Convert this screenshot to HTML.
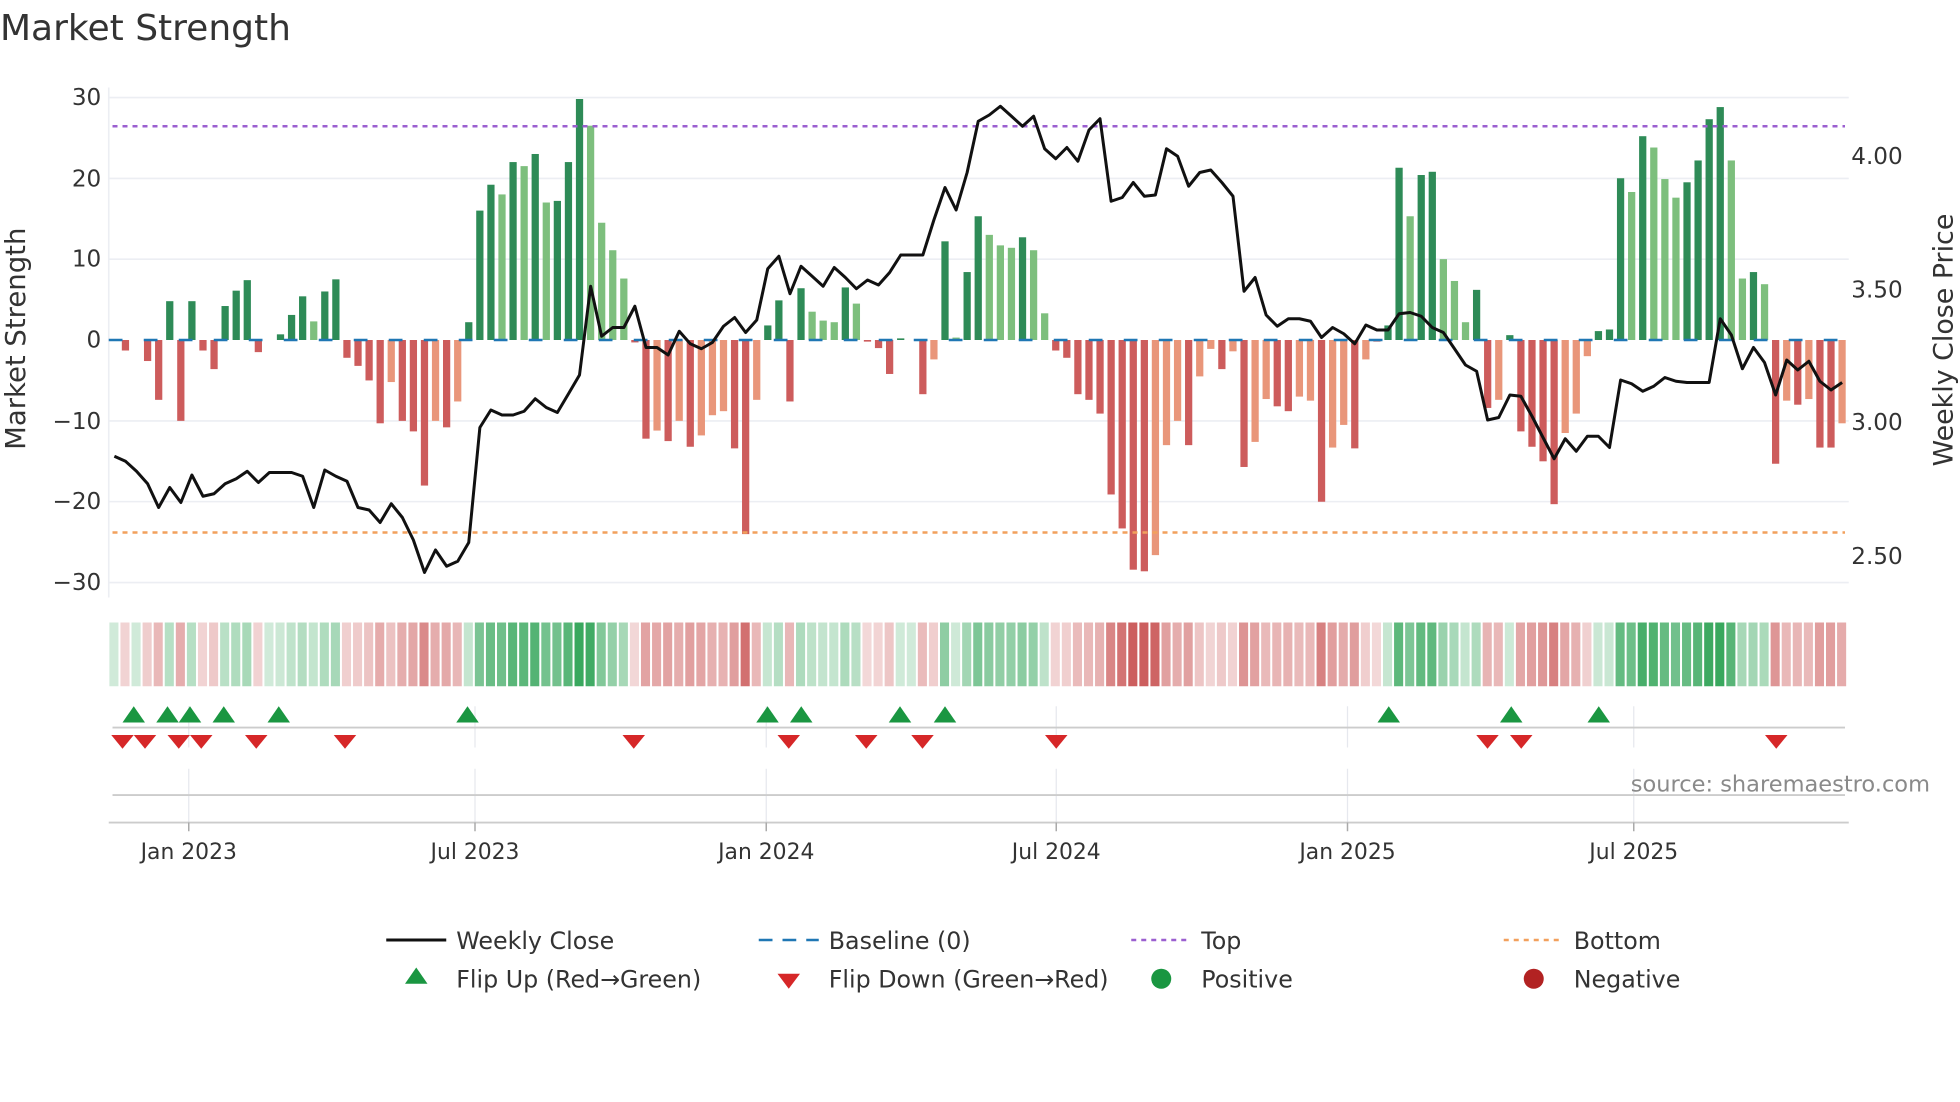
<!DOCTYPE html>
<html><head><meta charset="utf-8"><style>
html,body{margin:0;padding:0;background:#fff;}
svg{display:block;font-family:"DejaVu Sans","Liberation Sans",sans-serif;}
</style></head><body>
<svg id="s" width="1960" height="1102" viewBox="0 0 1568 881.6" xmlns="http://www.w3.org/2000/svg">
<rect width="1568" height="882" fill="#fff"/>
<text x="0" y="32" font-size="28.8" fill="#333">Market Strength</text>
<g stroke="#eceef3" stroke-width="1.3">
<line x1="87" x2="1479" y1="78" y2="78"/><line x1="87" x2="1479" y1="142.7" y2="142.7"/>
<line x1="87" x2="1479" y1="207.3" y2="207.3"/><line x1="87" x2="1479" y1="336.7" y2="336.7"/>
<line x1="87" x2="1479" y1="401.3" y2="401.3"/><line x1="87" x2="1479" y1="466" y2="466"/>
<line x1="87" x2="87" y1="70" y2="478"/>
</g>
<g font-size="18.5" fill="#333" text-anchor="end">
<text x="81" y="84">30</text><text x="81" y="149">20</text><text x="81" y="213">10</text>
<text x="81" y="278">0</text><text x="81" y="343">−10</text><text x="81" y="407">−20</text><text x="81" y="472">−30</text>
</g>
<g font-size="18.5" fill="#333">
<text x="1481" y="131">4.00</text><text x="1481" y="238">3.50</text><text x="1481" y="344">3.00</text><text x="1481" y="451">2.50</text>
</g>
<text transform="translate(20,271) rotate(-90)" font-size="22" fill="#333" text-anchor="middle">Market Strength</text>
<text transform="translate(1562,272) rotate(-90)" font-size="21.5" fill="#333" text-anchor="middle">Weekly Close Price</text>
<g id="bars"></g>
<line x1="87" x2="1479" y1="272" y2="272" stroke="#1f77b4" stroke-width="2" stroke-dasharray="11 17"/>
<line x1="90" x2="1476" y1="101" y2="101" stroke="#9b5fd0" stroke-width="2" stroke-dasharray="4 4"/>
<line x1="90" x2="1476" y1="426" y2="426" stroke="#f2a05d" stroke-width="2" stroke-dasharray="4 4"/>
<polyline id="price" fill="none" stroke="#111" stroke-width="2.4" stroke-linejoin="round"/>
<g id="heat"></g>
<g stroke="#e6e8ee" stroke-width="1">
<line x1="151" x2="151" y1="565" y2="598"/><line x1="380" x2="380" y1="565" y2="598"/><line x1="613" x2="613" y1="565" y2="598"/>
<line x1="845" x2="845" y1="565" y2="598"/><line x1="1078" x2="1078" y1="565" y2="598"/><line x1="1307" x2="1307" y1="565" y2="598"/>
<line x1="151" x2="151" y1="615" y2="658"/><line x1="380" x2="380" y1="615" y2="658"/><line x1="613" x2="613" y1="615" y2="658"/>
<line x1="845" x2="845" y1="615" y2="658"/><line x1="1078" x2="1078" y1="615" y2="658"/><line x1="1307" x2="1307" y1="615" y2="658"/>
</g>
<line x1="90" x2="1476" y1="582" y2="582" stroke="#ccc" stroke-width="1.5"/>
<line x1="90" x2="1476" y1="636" y2="636" stroke="#ccc" stroke-width="1.5"/>
<line x1="87" x2="1479" y1="658" y2="658" stroke="#ccc" stroke-width="1.5"/>
<g stroke="#aaa" stroke-width="1.2">
<line x1="151" x2="151" y1="658" y2="665"/><line x1="380" x2="380" y1="658" y2="665"/><line x1="613" x2="613" y1="658" y2="665"/>
<line x1="845" x2="845" y1="658" y2="665"/><line x1="1078" x2="1078" y1="658" y2="665"/><line x1="1307" x2="1307" y1="658" y2="665"/>
</g>
<g id="marks"></g>
<text x="1544" y="633" font-size="18" fill="#8a8a8a" text-anchor="end">source: sharemaestro.com</text>
<g font-size="17.5" fill="#333" text-anchor="middle">
<text x="151" y="687">Jan 2023</text><text x="380" y="687">Jul 2023</text><text x="613" y="687">Jan 2024</text>
<text x="845" y="687">Jul 2024</text><text x="1078" y="687">Jan 2025</text><text x="1307" y="687">Jul 2025</text>
</g>
<g font-size="19" fill="#333">
<line x1="309" x2="357" y1="752" y2="752" stroke="#111" stroke-width="2.4"/>
<text x="365" y="759">Weekly Close</text>
<polygon points="333,774 324,787 342,787" fill="#1a9641"/>
<text x="365" y="790">Flip Up (Red→Green)</text>
<line x1="607" x2="655" y1="752" y2="752" stroke="#1f77b4" stroke-width="2" stroke-dasharray="11 8"/>
<text x="663" y="759">Baseline (0)</text>
<polygon points="622,779 640,779 631,791" fill="#d62728"/>
<text x="663" y="790">Flip Down (Green→Red)</text>
<line x1="905" x2="953" y1="752" y2="752" stroke="#9b5fd0" stroke-width="2" stroke-dasharray="4 4"/>
<text x="961" y="759">Top</text>
<circle cx="929" cy="783" r="8" fill="#1a9641"/>
<text x="961" y="790">Positive</text>
<line x1="1203" x2="1251" y1="752" y2="752" stroke="#f2a05d" stroke-width="2" stroke-dasharray="4 4"/>
<text x="1259" y="759">Bottom</text>
<circle cx="1227" cy="783" r="8" fill="#b22222"/>
<text x="1259" y="790">Negative</text>
</g>
</svg>
<script>
var v=[0,-1.3,0,-2.6,-7.4,4.8,-10,4.8,-1.3,-3.6,4.2,6.1,7.4,-1.5,0,0.7,3.1,5.4,2.3,6,7.5,-2.2,-3.2,-5,-10.3,-5.2,-10,-11.3,-18,-10,-10.8,-7.6,2.2,16,19.2,18,22,21.5,23,17,17.2,22,29.8,26.5,14.5,11.1,7.6,-0.3,-12.2,-11.2,-12.5,-10,-13.2,-11.8,-9.3,-8.8,-13.4,-24,-7.4,1.8,4.9,-7.6,6.4,3.5,2.4,2.2,6.5,4.5,-0.2,-1,-4.2,0.2,0,-6.7,-2.4,12.2,0.3,8.4,15.3,13,11.7,11.4,12.7,11.1,3.3,-1.3,-2.2,-6.7,-7.4,-9.1,-19.1,-23.3,-28.4,-28.6,-26.6,-13,-10,-13,-4.5,-1.1,-3.6,-1.4,-15.7,-12.6,-7.3,-8.2,-8.8,-7,-7.5,-20,-13.3,-10.5,-13.4,-2.4,-0.2,1.8,21.3,15.3,20.4,20.8,10,7.3,2.2,6.2,-8.4,-7.4,0.6,-11.3,-13.2,-15,-20.3,-11.5,-9.1,-2,1.1,1.3,20,18.3,25.2,23.8,19.9,17.6,19.5,22.2,27.3,28.8,22.2,7.6,8.4,6.9,-15.3,-7.5,-8,-7.3,-13.3,-13.3,-10.3];
var light={18:1,25:1,29:1,31:1,35:1,37:1,39:1,43:1,44:1,45:1,46:1,49:1,51:1,53:1,54:1,55:1,58:1,63:1,64:1,65:1,67:1,74:1,76:1,79:1,80:1,81:1,83:1,84:1,94:1,95:1,96:1,98:1,99:1,101:1,103:1,104:1,107:1,108:1,110:1,111:1,113:1,117:1,120:1,121:1,122:1,125:1,131:1,132:1,133:1,137:1,139:1,140:1,141:1,146:1,147:1,149:1,151:1,153:1,156:1};
var p=[365,369,377,387,406,390,402,380,397,395,387,383,377,386,378,378,378,381,406,376,381,385,406,408,418,403,414,432,458,440,453,449,434,342,328,332,332,329,319,326,330,315,300,229,269,262,262,245,278,278,284,265,275,279,274,261,254,266,256,215,205,235,213,221,229,214,222,231,224,228,218,204,204,204,176,150,168,138,97,92,85,93,101,93,119,127,118,129,104,95,161,158,146,157,156,119,125,149,138,136,146,157,233,222,252,261,255,255,257,270,262,267,275,260,264,264,251,250,253,262,266,279,292,297,336,334,316,317,333,350,367,351,361,349,349,358,304,307,313,309,302,305,306,306,306,255,268,295,278,290,316,288,296,289,305,312,306];
var NS="http://www.w3.org/2000/svg",dx=8.86,x0=91.5;
function el(t,a,par){var e=document.createElementNS(NS,t);for(var k in a)e.setAttribute(k,a[k]);par.appendChild(e);return e;}
var bars=document.getElementById('bars'),heat=document.getElementById('heat');
function mix(c,t){return 'rgb('+[0,1,2].map(function(i){return Math.round(255+(c[i]-255)*t)}).join(',')+')';}
for(var i=0;i<v.length;i++){
 var x=x0+i*dx,val=v[i],h=Math.abs(val)*6.47,col;
 if(val>=0)col=light[i]?'#7dbf7d':'#2e8b57';else col=light[i]?'#e9967a':'#cd5c5c';
 if(h>0.5)el('rect',{x:x-2.9,y:val>=0?272-h:272,width:5.8,height:h,fill:col},bars);
 var t=0.22+0.7*Math.min(1,Math.abs(val)/28);
 var hc=val>=0?mix([40,160,80],t):mix([200,80,80],t);
 el('rect',{x:87+i*dx+0.5,y:498,width:dx-1.6,height:51,fill:hc},heat);
}
var pts=p.map(function(y,i){return (x0+i*dx).toFixed(1)+','+y}).join(' ');
document.getElementById('price').setAttribute('points',pts);
var m=document.getElementById('marks');
[107,134,152,179,223,374,614,641,720,756,1111,1209,1279].forEach(function(x){el('polygon',{points:x+',565 '+(x-9)+',578 '+(x+9)+',578',fill:'#1a9641'},m);});
[98,116,143,161,205,276,507,631,693,738,845,1190,1217,1421].forEach(function(x){el('polygon',{points:(x-9)+',588 '+(x+9)+',588 '+x+',599',fill:'#d62728'},m);});
</script>
</body></html>
